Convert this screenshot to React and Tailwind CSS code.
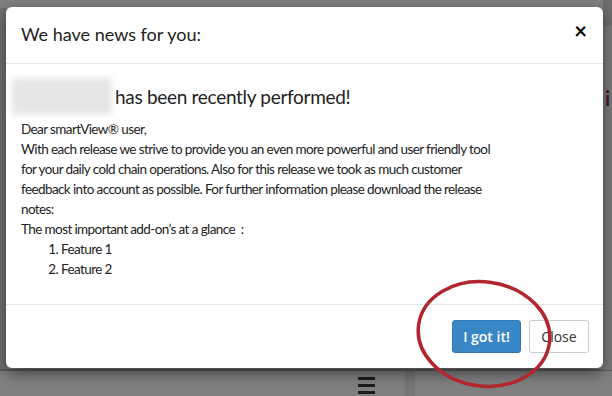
import React from 'react';

const NewsModal = () => {
  return (
    <div className="absolute left-[6px] top-[7px] w-[597px] h-[361px] bg-white rounded-[6px] shadow-[0_5px_15px_rgba(0,0,0,0.5)] flex flex-col">
      <div className="h-[57px] flex items-center justify-between pl-[15px] pr-[15px] border-b border-[#e5e5e5]">
        <h4 className="text-[18px] text-[#222] leading-none -mt-[2px]">We have news for you:</h4>
        <button className="text-[22px] font-bold text-black leading-none -mt-[8px] mr-[1px]">×</button>
      </div>

      <div className="flex-1 pl-[15px] pr-[15px] pt-[14px]">
        <div className="flex items-center gap-[3px]">
          <div className="w-[100px] h-[37px] bg-[#e6e6e6] blur-[3px] rounded-[4px] -ml-[9px]" />
          <span className="text-[19px] tracking-[-0.3px] text-[#222] leading-none">has been recently performed!</span>
        </div>
        <div className="mt-[4px] text-[13.5px] tracking-[-0.6px] leading-[20px] text-[#222]">
          <p>Dear smartView® user,</p>
          <p>
            With each release we strive to provide you an even more powerful and user friendly tool
            <br />
            for your daily cold chain operations. Also for this release we took as much customer
            <br />
            feedback into account as possible. For further information please download the release
            <br />
            notes:
          </p>
          <p>The most important add-on’s at a glance &nbsp;:</p>
          <ol className="list-decimal pl-[40px]">
            <li>Feature 1</li>
            <li>Feature 2</li>
          </ol>
        </div>
      </div>

      <div className="h-[64px] border-t border-[#e5e5e5] flex items-center justify-end gap-[8px] pr-[14px] font-['Open_Sans',sans-serif]">
        <button className="w-[69px] h-[33px] rounded-[3px] bg-[#3a87c5] border border-[#2e78b4] text-white text-[14px] font-semibold">
          I got it!
        </button>
        <button className="w-[60px] h-[33px] rounded-[3px] bg-white border border-[#cccccc] text-[#333] text-[14px]">
          Close
        </button>
      </div>
    </div>
  );
};

const App = () => {
  return (
    <div className="w-[612px] h-[396px] relative overflow-hidden bg-[#808080] font-['Lato',sans-serif]">
      {/* dimmed page behind the overlay */}
      <div className="absolute left-0 top-[8px] w-[6px] h-[362px] bg-[#717171]" />
      <div className="absolute left-0 top-[369px] w-[612px] h-[2px] bg-[#5f5f5f]" />
      <div className="absolute left-[405px] top-[371px] w-[10px] h-[25px] bg-[#767676]" />
      <div className="absolute left-[603px] top-0 w-[9px] h-[26px] bg-[#6e6e6e]" />
      <div className="absolute left-[603px] top-[26px] w-[9px] h-[344px] bg-[#7a7a7a]" />
      <div className="absolute left-[605px] top-[88px] w-[7px] overflow-hidden text-[20px] font-bold text-[#4d1530] leading-none">i</div>
      <div className="absolute left-[358px] top-[377px] w-[17px] flex flex-col gap-[4px]">
        <div className="h-[3px] bg-[#1c1c1c]" />
        <div className="h-[3px] bg-[#1c1c1c]" />
        <div className="h-[3px] bg-[#1c1c1c]" />
      </div>

      <NewsModal />

      <svg className="absolute left-0 top-0" width="612" height="396" viewBox="0 0 612 396">
        <ellipse cx="484" cy="334" rx="66" ry="52" transform="rotate(8 484 334)" fill="none" stroke="#b1262f" strokeWidth="3.5" />
      </svg>
    </div>
  );
};

export default App;
